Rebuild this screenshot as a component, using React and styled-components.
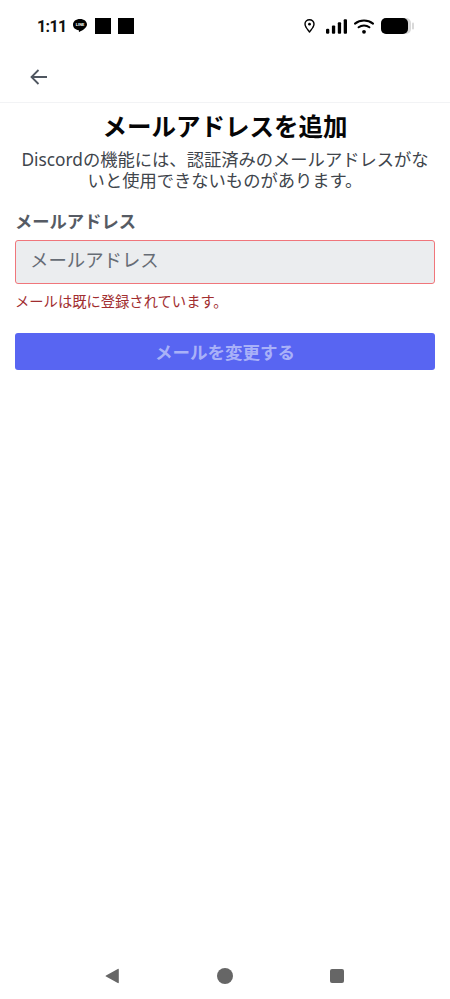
import styled, { createGlobalStyle } from 'styled-components';

const GlobalStyle = createGlobalStyle`
    html, body {
        margin: 0;
        padding: 0;
        background: #ffffff;
    }

    * {
        box-sizing: border-box;
    }

    #root {
        height: 999px;
    }
`;

function LineIcon () {
    return (
        <svg width="16" height="16" viewBox="0 0 16 16">
            <path d="M8 1C3.900 1 1 3.400 1 6.800c0 3 2.400 5 5.600 5.400.5.100.4.500.3 1-.1.500-.1 1 .4.800 1.500-.6 6.700-3.500 7.400-6.200.2-.4.300-.9.300-1.000C15 3.400 12.100 1 8 1z" fill="#000" />
            <text x="8" y="8.400" textAnchor="middle" fontSize="4" fontWeight="700" fontFamily="Roboto, sans-serif" fill="#fff">LINE</text>
        </svg>
    );
}

function LocationIcon () {
    return (
        <svg width="11" height="14" viewBox="0 0 11 14">
            <path d="M5.500.8C2.900.8 1 2.700 1 5.100c0 1.200.5 2.300 1.200 3.400.9 1.500 2.200 3 3.300 4.500 1.100-1.500 2.400-3 3.300-4.500.7-1.100 1.200-2.200 1.200-3.400C10 2.700 8.100.8 5.500.8z" fill="none" stroke="#000" strokeWidth="1.400" strokeLinejoin="round" />
            <circle cx="5.500" cy="5.200" r="1.400" fill="#000" />
        </svg>
    );
}

function SignalIcon () {
    return (
        <svg width="21" height="15" viewBox="0 0 21 15">
            <rect x="0" y="9.800" width="3.300" height="5" rx="1.200" fill="#000" />
            <rect x="5.900" y="6.500" width="3.300" height="8.300" rx="1" fill="#000" />
            <rect x="11.800" y="3.200" width="3.300" height="11.600" rx="1" fill="#000" />
            <rect x="17.700" y="0.200" width="3.300" height="14.600" rx="1" fill="#000" />
        </svg>
    );
}

function WifiIcon () {
    return (
        <svg width="20" height="15" viewBox="0 0 20 15">
            <path d="M1 4.600c5.200-4 12.800-4 18 0" fill="none" stroke="#000" strokeWidth="2" strokeLinecap="round" />
            <path d="M4.600 8.300c3.100-2.400 7.700-2.400 10.800 0" fill="none" stroke="#000" strokeWidth="2" strokeLinecap="round" />
            <circle cx="10" cy="12.800" r="1.900" fill="#000" />
        </svg>
    );
}

function BatteryIcon () {
    return (
        <svg width="33" height="16" viewBox="0 0 33 16">
            <rect x="0" y="0" width="30" height="16" rx="5" fill="#d9d9d9" />
            <rect x="0" y="0" width="27" height="16" rx="5" fill="#000" />
            <rect x="31" y="4.500" width="2" height="7" rx="1" fill="#d9d9d9" />
        </svg>
    );
}

function BackArrow () {
    return (
        <svg width="24" height="24" viewBox="0 0 24 24">
            <path d="M20 12H5M11.500 5L4.500 12l7 7" fill="none" stroke="#4f5660" strokeWidth="1.800" />
        </svg>
    );
}

function App () {
    return (
        <Page>
            <GlobalStyle />
            <StatusBar>
                <StatusGroup>
                    <Clock>1:11</Clock>
                    <LineIcon />
                    <BlackSquare />
                    <BlackSquare />
                </StatusGroup>
                <StatusIcons>
                    <LocationIcon />
                    <SignalGap>
                        <SignalIcon />
                    </SignalGap>
                    <WifiIcon />
                    <BatteryIcon />
                </StatusIcons>
            </StatusBar>
            <Header>
                <BackArrow />
            </Header>
            <Content>
                <Title>メールアドレスを追加</Title>
                <Description>Discordの機能には、認証済みのメールアドレスがないと使用できないものがあります。</Description>
                <FieldLabel>メールアドレス</FieldLabel>
                <EmailInput placeholder="メールアドレス" readOnly />
                <ErrorText>メールは既に登録されています。</ErrorText>
                <SubmitButton>メールを変更する</SubmitButton>
            </Content>
            <NavBar>
                <svg width="16" height="16" viewBox="0 0 16 16">
                    <path d="M14.800 1.500v13c0 .6-.5.8-1 .5L2 8.600c-.5-.3-.5-.9 0-1.200L13.800 1c.5-.3 1-.1 1 .5z" fill="#666666" />
                </svg>
                <HomeDot />
                <RecentSquare />
            </NavBar>
        </Page>
    );
}

const Page = styled.div`
    width: 450px;
    height: 999px;
    display: flex;
    flex-direction: column;
    background: #ffffff;
    font-family: "Noto Sans", "Noto Sans CJK JP", sans-serif;
`;

const StatusBar = styled.div`
    height: 52px;
    padding: 0 36px 0 37px;
    display: flex;
    justify-content: space-between;
    align-items: center;
`;

const StatusGroup = styled.div`
    display: flex;
    align-items: center;
    gap: 7px;
`;

const Clock = styled.span`
    width: 28px;
    font-family: Roboto, sans-serif;
    font-size: 16px;
    font-weight: 700;
    letter-spacing: -0.6px;
    color: #111111;
`;

const BlackSquare = styled.div`
    width: 16px;
    height: 16px;
    background: #000000;
`;

const StatusIcons = styled.div`
    display: flex;
    align-items: center;
    gap: 7px;
`;

const SignalGap = styled.div`
    display: flex;
    margin-left: 4px;
`;

const Header = styled.div`
    height: 51px;
    padding-left: 27px;
    display: flex;
    align-items: center;
    border-bottom: 1px solid #f2f3f5;
`;

const Content = styled.div`
    flex: 1;
    padding: 8px 15px 0;
    display: flex;
    flex-direction: column;
`;

const Title = styled.h1`
    margin: 0;
    font-size: 24.500px;
    line-height: 32px;
    font-weight: 700;
    color: #060607;
    text-align: center;
`;

const Description = styled.p`
    margin: 6px 0 0;
    padding: 0 5px;
    font-size: 17.300px;
    line-height: 21px;
    color: #40454c;
    text-align: center;
`;

const FieldLabel = styled.label`
    margin-top: 19px;
    font-size: 17.300px;
    line-height: 24px;
    font-weight: 700;
    color: #565b64;
`;

const EmailInput = styled.input`
    margin-top: 6px;
    width: 420px;
    height: 44px;
    padding: 0 14px 6px;
    border: 1.500px solid #f0767b;
    border-radius: 3px;
    background: #ebedef;
    font-family: inherit;
    font-size: 18.400px;
    outline: none;

    &::placeholder {
        color: #666c75;
        opacity: 1;
    }
`;

const ErrorText = styled.div`
    margin-top: 8px;
    font-size: 14.300px;
    line-height: 20px;
    color: #a12d2f;
`;

const SubmitButton = styled.button`
    margin-top: 21px;
    width: 420px;
    height: 37px;
    padding: 0;
    border: none;
    border-radius: 3px;
    background: #5865f2;
    font-family: inherit;
    font-size: 17.500px;
    font-weight: 700;
    color: #a9b1f8;
`;

const NavBar = styled.div`
    height: 46px;
    padding: 0 106px 0 104px;
    display: flex;
    justify-content: space-between;
    align-items: center;
`;

const HomeDot = styled.div`
    width: 16px;
    height: 16px;
    border-radius: 50%;
    background: #666666;
`;

const RecentSquare = styled.div`
    width: 14px;
    height: 14px;
    border-radius: 2px;
    background: #666666;
`;

export default App;
